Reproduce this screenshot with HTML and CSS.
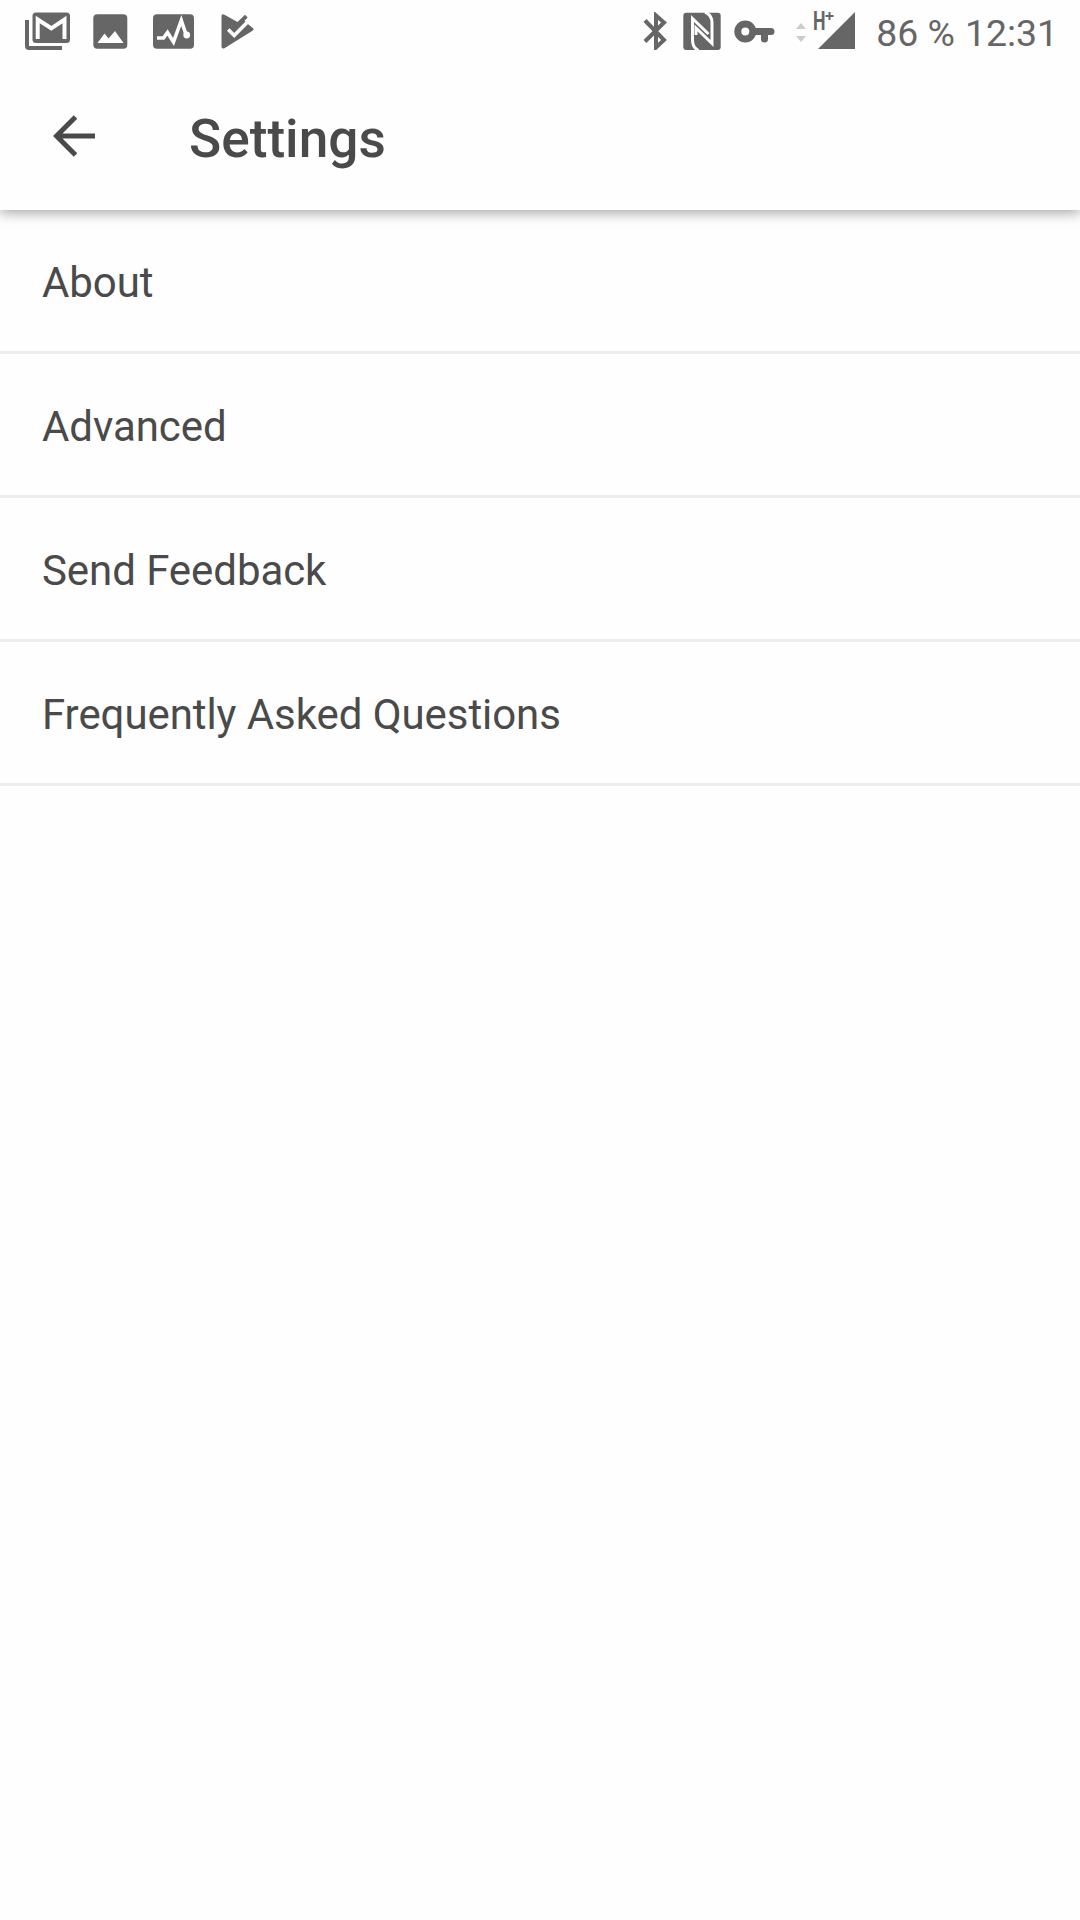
FILE: index.html
```html
<!DOCTYPE html>
<html lang="en">
<head>
    <meta charset="UTF-8">
    <meta name="viewport" content="width=device-width, initial-scale=1.0">
    <title>Settings</title>
    <link rel="stylesheet" href="styles.css">
</head>
<body>
    <header class="header">
        <div class="status-bar">
            <div class="notifications">
                <!-- Mail -->
                <svg width="45" height="38" viewBox="0 0 45 38">
                    <path d="M2 8v26q0 2 2 2h33" fill="none" stroke="#666" stroke-width="4"/>
                    <rect x="7.5" y="0.5" width="37.5" height="30.5" rx="3.5" fill="#666"/>
                    <path d="M12.7 27V7.5l13.6 8.8 13.2-8.8V27" fill="none" stroke="#fefefe" stroke-width="4"/>
                </svg>
                <!-- Picture -->
                <svg class="picture" width="35" height="38" viewBox="0 0 35 38">
                    <rect x="0.3" y="2.3" width="34" height="34.5" rx="4" fill="#666"/>
                    <path d="M4.5 31l7-9.5 4 5 6.5-7.5 8.5 12z" fill="#fefefe"/>
                </svg>
                <!-- Activity -->
                <svg class="pulse" width="41" height="38" viewBox="0 0 41 38">
                    <rect x="0" y="2.3" width="41" height="34.5" rx="4" fill="#666"/>
                    <path d="M4 26h6.5l4-5.5 6 9.5 7.8-21.5 4.7 14" fill="none" stroke="#fefefe" stroke-width="3.6"/>
                    <circle cx="33.7" cy="23" r="3.4" fill="#fefefe"/>
                </svg>
                <!-- Play protect -->
                <svg class="play" width="33" height="38" viewBox="0 0 33 38">
                    <path d="M0.5 4q0-2.5 2.5-1.5l13.5 7.5 7.5-7.3 2.7 2.7-3.2 3.3 3 3 5 4q2 1.5 0 3L3 36.5Q0.5 37 0.5 34.5z" fill="#666"/>
                    <path d="M7.2 17.5l6 6L28 8.5" fill="none" stroke="#fefefe" stroke-width="3.6"/>
                </svg>
            </div>
            <div class="system">
                <!-- Bluetooth -->
                <svg width="24" height="38" viewBox="0 0 24 38">
                    <path d="M2 8.5l19 19.5-8 7.5V3.5l8 7L2 29.5" fill="none" stroke="#666" stroke-width="4"/>
                </svg>
                <!-- NFC -->
                <svg class="nfc" width="38" height="38" viewBox="0 0 38 38">
                    <rect x="0.3" y="0.7" width="37.4" height="37.3" rx="3" fill="#666"/>
                    <path d="M15.5 38.5q-6-3-6-10.5V6.5L25.5 22M22 0q7 3 7 10.5v21L13 16v7" fill="none" stroke="#fefefe" stroke-width="3"/>
                </svg>
                <!-- VPN key -->
                <svg class="key" width="41" height="38" viewBox="0 0 41 38">
                    <circle cx="11.3" cy="19.5" r="7.5" fill="none" stroke="#666" stroke-width="7"/>
                    <path d="M20 19.5h17M30.5 20v7" fill="none" stroke="#666" stroke-width="7" stroke-linecap="round"/>
                </svg>
                <!-- Data activity -->
                <svg class="data" width="10" height="38" viewBox="0 0 10 38">
                    <path d="M0 17l5-6 5 6zM0 24h10l-5 6z" fill="#ccc"/>
                </svg>
                <!-- Signal -->
                <svg class="signal" width="43" height="38" viewBox="0 0 43 38">
                    <path d="M5 37L42 0v37z" fill="#666"/>
                    <text class="network" x="0" y="18" textLength="12.5" lengthAdjust="spacingAndGlyphs">H</text>
                    <path d="M12.5 4h8M16.5 0v8" stroke="#666" stroke-width="2"/>
                </svg>
                <span class="battery">86 %</span>
                <span class="clock">12:31</span>
            </div>
        </div>
        <div class="toolbar">
            <svg class="back" width="42" height="42" viewBox="0 0 42 42">
                <path d="M42 21H4M22.5 2L3.5 21l19 19" fill="none" stroke="#4a4a4a" stroke-width="5"/>
            </svg>
            <h1>Settings</h1>
        </div>
    </header>
    <ul class="settings-list">
        <li>About</li>
        <li>Advanced</li>
        <li>Send Feedback</li>
        <li>Frequently Asked Questions</li>
    </ul>
</body>
</html>
```
FILE: styles.css
```css
* {
    box-sizing: border-box;
}

body {
    margin: 0;
    min-height: 100vh;
    background-color: #fefefe;
    color: #4a4a4a;
    font-family: Roboto, "Liberation Sans", sans-serif;
}

svg {
    display: block;
    flex: none;
}

.header {
    position: relative;
    height: 210px;
    background-color: #fefefe;
    box-shadow: 0 3px 12px rgba(0, 0, 0, 0.35);
}

.status-bar {
    display: flex;
    justify-content: space-between;
    height: 72px;
    padding: 12px 22px 0 25px;
    color: #666;
}

.notifications,
.system {
    display: flex;
    height: 38px;
}

.picture {
    margin-left: 23px;
}

.pulse {
    margin-left: 25px;
}

.play {
    margin-left: 27px;
}

.nfc {
    margin-left: 16px;
}

.key {
    margin-left: 13px;
}

.data {
    margin-left: 21px;
}

.signal {
    margin-left: 7px;
    overflow: visible;
}

.network {
    font-size: 25px;
    font-weight: bold;
    fill: #666;
}

.battery,
.clock {
    font-size: 37.4px;
    line-height: 43px;
    white-space: nowrap;
}

.battery {
    margin-left: 20px;
}

.clock {
    margin-left: 10px;
}

.toolbar {
    display: flex;
    align-items: center;
    height: 130px;
    padding-left: 53px;
}

.toolbar h1 {
    margin: 4px 0 0 94px;
    font-size: 53.2px;
    font-weight: 500;
    line-height: 64px;
}

.back {
    margin-top: -2px;
}

.settings-list {
    margin: 0;
    padding: 0;
    list-style: none;
}

.settings-list li {
    display: flex;
    align-items: center;
    height: 144px;
    padding: 4px 0 0 42px;
    border-bottom: 3px solid #ededed;
    font-size: 42px;
    letter-spacing: -0.07px;
}
```
